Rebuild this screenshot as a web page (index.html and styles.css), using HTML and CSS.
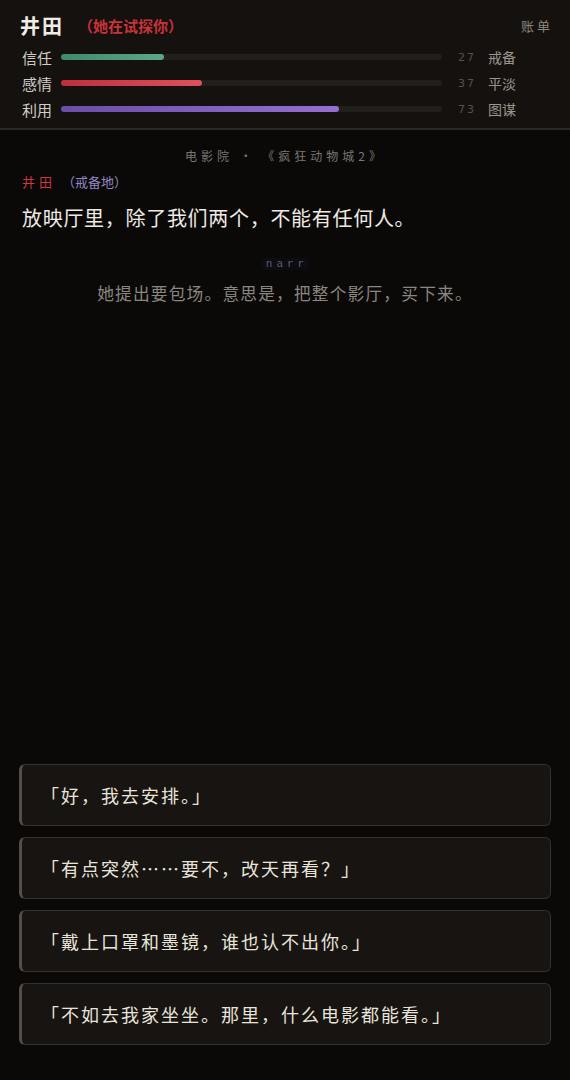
FILE: index.html
```html
<!DOCTYPE html>
<html lang="zh">
<head>
    <meta charset="UTF-8">
    <title>井田</title>
    <link rel="stylesheet" href="styles.css">
</head>
<body>
    <div class="app">
        <div class="top-bar">
            <div class="title-row">
                <span class="npc-name">井田</span>
                <span class="npc-mood">（她在试探你）</span>
                <span class="bill">账单</span>
            </div>
            <div class="stat-row">
                <span class="stat-label">信任</span>
                <div class="bar"><div class="fill trust" style="width: 27%"></div></div>
                <span class="stat-num">27</span>
                <span class="stat-tag">戒备</span>
            </div>
            <div class="stat-row">
                <span class="stat-label">感情</span>
                <div class="bar"><div class="fill love" style="width: 37%"></div></div>
                <span class="stat-num">37</span>
                <span class="stat-tag">平淡</span>
            </div>
            <div class="stat-row">
                <span class="stat-label">利用</span>
                <div class="bar"><div class="fill use" style="width: 73%"></div></div>
                <span class="stat-num">73</span>
                <span class="stat-tag">图谋</span>
            </div>
        </div>

        <div class="scene">
            <div class="location">电影院 · 《疯狂动物城2》</div>
            <div class="speaker">
                <span class="speaker-name">井田</span>
                <span class="speaker-mood">（戒备地）</span>
            </div>
            <div class="line">放映厅里，除了我们两个，不能有任何人。</div>
            <div class="narr-tag"><span>narr</span></div>
            <div class="narr">她提出要包场。意思是，把整个影厅，买下来。</div>
        </div>

        <div class="choices">
            <button class="choice">「好，我去安排。」</button>
            <button class="choice">「有点突然……要不，改天再看？」</button>
            <button class="choice">「戴上口罩和墨镜，谁也认不出你。」</button>
            <button class="choice">「不如去我家坐坐。那里，什么电影都能看。」</button>
        </div>
    </div>
</body>
</html>
```

FILE: styles.css
```css
body {
    margin: 0;
    padding: 0;
    background-color: #0b0908;
    color: #e6e2dc;
    font-family: "Noto Sans CJK SC", "Noto Sans", sans-serif;
}
.app {
    display: flex;
    flex-direction: column;
    height: 100vh;
}
.top-bar {
    background-color: #15110e;
    border-bottom: 2px solid #2c2824;
    padding: 9px 20px 7px 20px;
    height: 112px;
}
.title-row {
    display: flex;
    align-items: center;
    height: 32px;
    margin-bottom: 3px;
}
.npc-name {
    font-size: 20px;
    font-weight: bold;
    color: #f0ece6;
    letter-spacing: 2px;
}
.npc-mood {
    font-size: 15px;
    font-weight: bold;
    color: #c8323a;
    margin-left: 14px;
}
.bill {
    margin-left: auto;
    margin-right: -3px;
    font-size: 13px;
    color: #8a857e;
    letter-spacing: 3px;
}
.stat-row {
    display: flex;
    align-items: center;
    height: 26px;
}
.stat-label {
    width: 39px;
    padding-left: 2px;
    font-size: 15px;
    color: #d0ccc6;
}
.bar {
    width: 381px;
    height: 6px;
    border-radius: 3px;
    background-color: #221e1b;
}
.fill {
    height: 100%;
    border-radius: 3px;
}
.trust {
    background: linear-gradient(90deg, #3f8a6a, #5aa886);
}
.love {
    background: linear-gradient(90deg, #c02e3c, #e0505a);
}
.use {
    background: linear-gradient(90deg, #6a4ea8, #9470d0);
}
.stat-num {
    width: 30px;
    margin-left: 16px;
    font-family: "DejaVu Sans", sans-serif;
    font-size: 11px;
    color: #55514c;
    letter-spacing: 2px;
}
.stat-tag {
    font-size: 14px;
    color: #9a958e;
}
.scene {
    flex: 1;
    padding: 17px 22px 0 22px;
}
.location {
    text-align: center;
    font-size: 12px;
    color: #7a7670;
    letter-spacing: 4px;
}
.speaker {
    margin-top: 8px;
    font-size: 13px;
}
.speaker-name {
    color: #c8383e;
    letter-spacing: 4px;
}
.speaker-mood {
    color: #8f86c0;
    margin-left: 3px;
}
.line {
    margin-top: 12px;
    font-size: 20px;
    letter-spacing: 0.7px;
    color: #eeeae4;
    line-height: 30px;
}
.narr-tag {
    text-align: center;
    margin-top: 20px;
    line-height: 14px;
}
.narr-tag span {
    font-family: "Liberation Mono", monospace;
    font-size: 11px;
    letter-spacing: 4px;
    color: #5c5c78;
    background-color: #0d0c12;
    padding: 0 0 0 4px;
}
.narr {
    text-align: center;
    margin-top: 10px;
    font-size: 16.7px;
    letter-spacing: 1.2px;
    color: #8a8680;
}
.choices {
    display: flex;
    flex-direction: column;
    gap: 11px;
    padding: 0 19px 35px 19px;
}
.choice {
    height: 62px;
    text-align: left;
    padding: 0 0 0 19px;
    font-family: "Noto Sans CJK SC", sans-serif;
    font-size: 18px;
    letter-spacing: 2px;
    color: #e8e4dc;
    background-color: #171411;
    border: 1px solid #35302b;
    border-left: 3px solid #564e46;
    border-radius: 6px;
    cursor: pointer;
}
```
